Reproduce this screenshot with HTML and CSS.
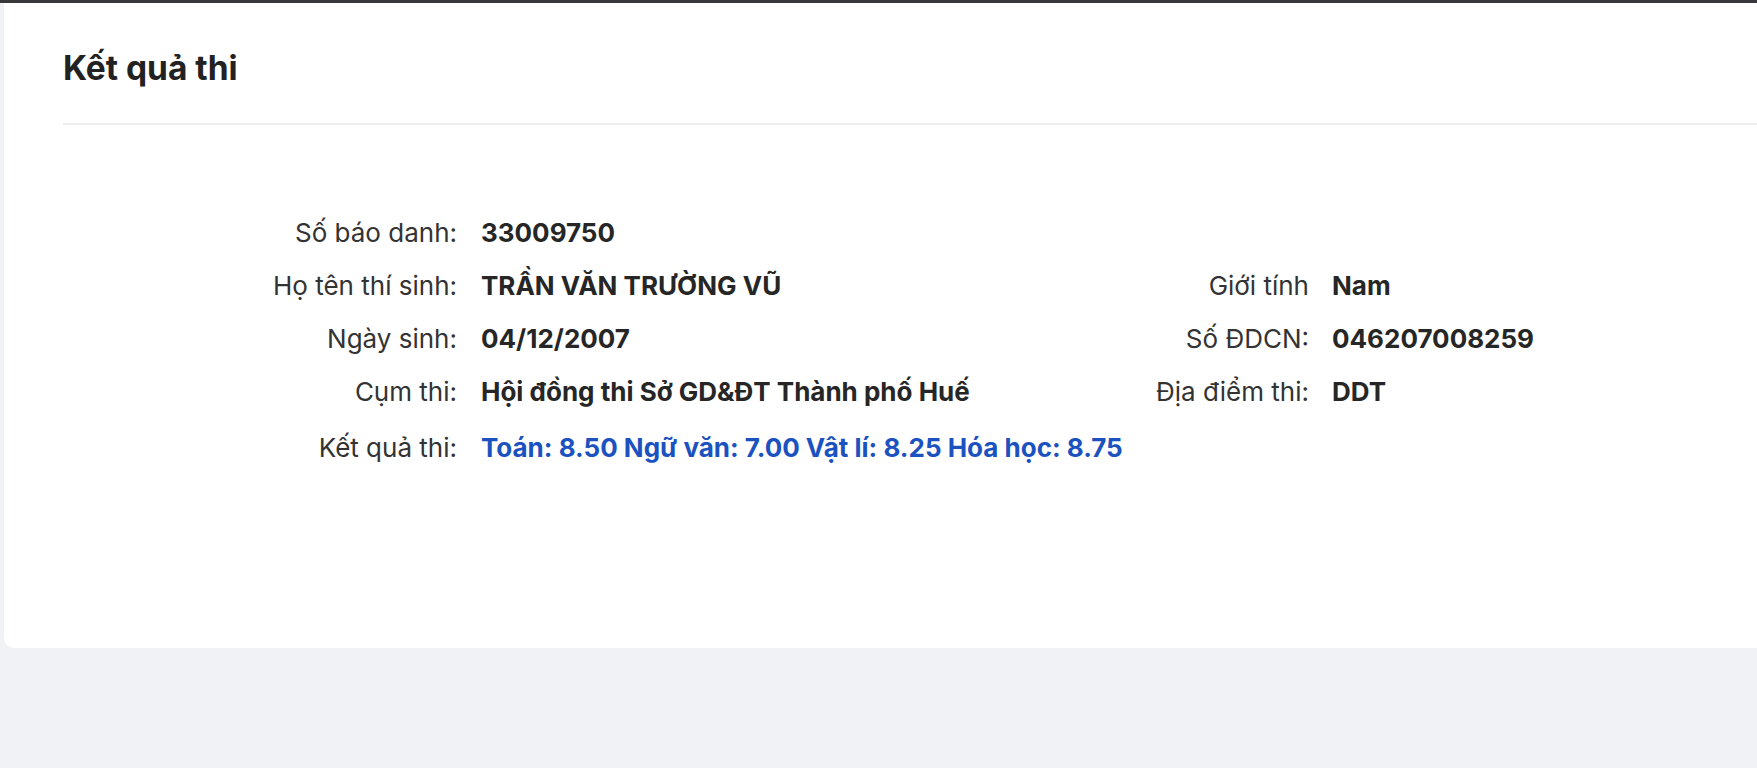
FILE: index.html
```html
<!DOCTYPE html>
<html lang="vi">
<head>
<meta charset="utf-8">
<title>Kết quả thi</title>
<link rel="stylesheet" href="styles.css">
</head>
<body>
<div class="topbar"></div>
<main class="page">
  <section class="card">
    <header class="card-head">
      <h1 class="title">Kết quả thi</h1>
    </header>
    <div class="info">
      <div class="lbl">Số báo danh:</div>
      <div class="val">33009750</div>
      <div class="lbl2"></div>
      <div class="val2"></div>

      <div class="lbl">Họ tên thí sinh:</div>
      <div class="val">TRẦN VĂN TRƯỜNG VŨ</div>
      <div class="lbl2">Giới tính</div>
      <div class="val2">Nam</div>

      <div class="lbl">Ngày sinh:</div>
      <div class="val">04/12/2007</div>
      <div class="lbl2">Số ĐDCN:</div>
      <div class="val2">046207008259</div>

      <div class="lbl">Cụm thi:</div>
      <div class="val">Hội đồng thi Sở GD&amp;ĐT Thành phố Huế</div>
      <div class="lbl2">Địa điểm thi:</div>
      <div class="val2">DDT</div>

      <div class="lbl">Kết quả thi:</div>
      <div class="val score">Toán: 8.50 Ngữ văn: 7.00 Vật lí: 8.25 Hóa học: 8.75</div>
      <div class="lbl2"></div>
      <div class="val2"></div>
    </div>
  </section>
</main>
</body>
</html>
```

FILE: styles.css
```css
html, body {
  margin: 0;
  padding: 0;
}
body {
  background: #f0f2f5;
  font-family: Inter, "Noto Sans", "Liberation Sans", sans-serif;
  color: #2b2b2b;
  overflow: hidden;
}
.topbar {
  height: 3px;
  background: #38383b;
}
.page {
  padding-left: 4px;
}
.card {
  background: #ffffff;
  border-radius: 0 0 0 10px;
  height: 645px;
  padding-left: 59px;
  box-sizing: border-box;
}
.card-head {
  border-bottom: 2px solid #ececec;
  height: 122px;
  box-sizing: border-box;
  display: flex;
  align-items: flex-start;
}
.title {
  margin: 0;
  padding-top: 45px;
  font-size: 33.5px;
  font-weight: 700;
  color: #222222;
  line-height: 40px;
}
.info {
  display: grid;
  grid-template-columns: 394px 674px 178px 1fr;
  grid-template-rows: repeat(4, 53px) 60px;
  align-items: center;
  margin-top: 81px;
  font-size: 26px;
  line-height: 30px;
}
.lbl, .lbl2 {
  text-align: right;
  color: #333333;
  font-weight: 400;
}
.val, .val2 {
  font-weight: 700;
  color: #262626;
}
.val {
  padding-left: 24px;
}
.val2 {
  padding-left: 23px;
}
.score {
  color: #1b52c0;
}
```
